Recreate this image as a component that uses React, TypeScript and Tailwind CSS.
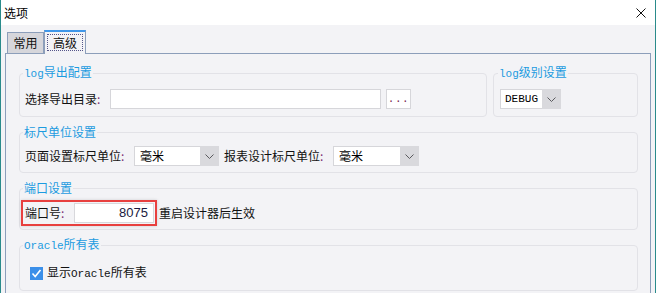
import React from 'react';

const CJK = "font-['Noto_Sans_CJK_SC',sans-serif]";
const MONO = "font-['Liberation_Mono','Noto_Sans_CJK_SC',monospace]";

function Mono({ children }: { children: React.ReactNode }) {
  return <span className={`${MONO} text-[11px]`}>{children}</span>;
}

function Colon() {
  return <span className="text-[#7b2a72]">:</span>;
}

function GroupBox({
  title,
  className,
  children,
}: {
  title: React.ReactNode;
  className?: string;
  children: React.ReactNode;
}) {
  return (
    <fieldset className={`border border-[#e2e2e7] rounded-[4px] px-[5px] min-w-0 ${className ?? ''}`}>
      <legend className="-ml-[2px] px-[1px] leading-[16px] text-[12px] text-[#1c9be0]">{title}</legend>
      {children}
    </fieldset>
  );
}

function Chevron() {
  return (
    <svg width="9" height="5" viewBox="0 0 9 5" className="block">
      <polyline points="0.5,0.5 4.5,4.5 8.5,0.5" fill="none" stroke="#5a5a5e" strokeWidth="1" />
    </svg>
  );
}

function Select({ value, w, mono }: { value: string; w: string; mono?: boolean }) {
  return (
    <div className={`flex h-[20px] ${w} border border-[#d6d6da] bg-white shrink-0`}>
      <span
        className={`flex-1 flex items-center text-black ${
          mono ? "pl-[4px] font-['Liberation_Mono',monospace] text-[11px]" : 'pl-[5px] text-[12px]'
        }`}
      >
        {value}
      </span>
      <span className="w-[19px] -my-[1px] -mr-[1px] bg-[#d9d9dd] flex items-center justify-center">
        <Chevron />
      </span>
    </div>
  );
}

export default function App() {
  return (
    <div
      className={`w-[656px] h-[293px] overflow-hidden flex flex-col border-x border-[#2a8b8b] bg-[#f3f3f6] text-[12px] text-[#111] ${CJK}`}
    >
      {/* title bar */}
      <div className="h-[25px] shrink-0 bg-white flex items-center justify-between pl-[3px] pr-[9px]">
        <span className="text-[12px] leading-none text-black">选项</span>
        <svg width="10" height="10" viewBox="0 0 10 10">
          <path d="M0.5 0.5 L9.5 9.5 M9.5 0.5 L0.5 9.5" stroke="#111" strokeWidth="1" />
        </svg>
      </div>

      <div className="flex-1 flex flex-col px-[4px] pt-[5px]">
        {/* tabs */}
        <div className="flex items-end h-[23px] pl-[2px]">
          <div className="h-[21px] w-[37px] border-l border-t border-r border-[#8c9eba] bg-[#d6d6db] flex items-center justify-center">
            常用
          </div>
          <div className="relative z-10 h-[24px] w-[42px] -mb-[1px] border-l border-r border-[#8c9eba] border-t-2 border-t-[#3f97ea] bg-[#f3f3f6] p-[2px] pb-[3px]">
            <div className="h-full border border-dotted border-[#55558a] flex items-center justify-center">
              高级
            </div>
          </div>
        </div>

        {/* panel */}
        <div className="h-[400px] border border-[#8c9eba] pt-[10px] pl-[13px] pr-[12px] flex flex-col">
          <div className="flex gap-[6px]">
            <GroupBox title={<><Mono>log</Mono>导出配置</>} className="w-[468px] shrink-0 pt-[7px] pb-[7px]">
              <div className="flex items-center h-[20px]">
                <span className="w-[85px] shrink-0">
                  选择导出目录<Colon />
                </span>
                <div className="w-[271px] h-[20px] border border-[#d6d6da] bg-white" />
                <div
                  className={`ml-[5px] w-[25px] h-[20px] border border-[#d6d6da] bg-white flex items-center justify-center ${MONO} text-[11px] text-[#7b1f4f] tracking-[0.5px]`}
                >
                  ...
                </div>
              </div>
            </GroupBox>
            <GroupBox title={<><Mono>log</Mono>级别设置</>} className="flex-1 pl-[6px] pt-[7px] pb-[7px]">
              <div className="flex items-center h-[20px]">
                <Select value="DEBUG" w="w-[61px]" mono />
              </div>
            </GroupBox>
          </div>

          <GroupBox title="标尺单位设置" className="mt-[7px] pt-[6px] pb-[6px]">
            <div className="flex items-center h-[20px]">
              <span className="w-[109px] shrink-0">
                页面设置标尺单位<Colon />
              </span>
              <Select value="毫米" w="w-[85px]" />
              <span className="ml-[5px] w-[109px] shrink-0">
                报表设计标尺单位<Colon />
              </span>
              <Select value="毫米" w="w-[86px]" />
            </div>
          </GroupBox>

          <GroupBox title="端口设置" className="mt-[7px] pt-[4px] pb-[3px]">
            <div className="flex items-center">
              <div className="-ml-[4px] flex items-center border-2 border-[#e8403f] pl-[2px] pr-[1px] py-[1px] shadow-[0_0_3px_rgba(0,0,0,0.15)]">
                <span className="w-[49px] shrink-0">
                  端口号<Colon />
                </span>
                <div className="w-[80px] h-[20px] border border-[#d8d8dc] bg-white flex items-center justify-end pr-[5px] font-['Liberation_Sans',sans-serif] text-[13px] text-[#1a1a40]">
                  8075
                </div>
              </div>
              <span className="ml-[2px]">重启设计器后生效</span>
            </div>
          </GroupBox>

          <GroupBox title={<><Mono>Oracle</Mono>所有表</>} className="mt-[6px] pt-[9px] pb-[7px]">
            <div className="flex items-center h-[20px] pl-[5px]">
              <svg width="13" height="13" viewBox="0 0 13 13" className="shrink-0">
                <rect x="0" y="0" width="13" height="13" fill="#3b8fe9" />
                <polyline points="2.5,6.5 5.2,9.5 10.5,3" fill="none" stroke="#fff" strokeWidth="1.6" />
              </svg>
              <span className="ml-[4px]">
                显示<Mono>Oracle</Mono>所有表
              </span>
            </div>
          </GroupBox>
        </div>
      </div>
    </div>
  );
}
